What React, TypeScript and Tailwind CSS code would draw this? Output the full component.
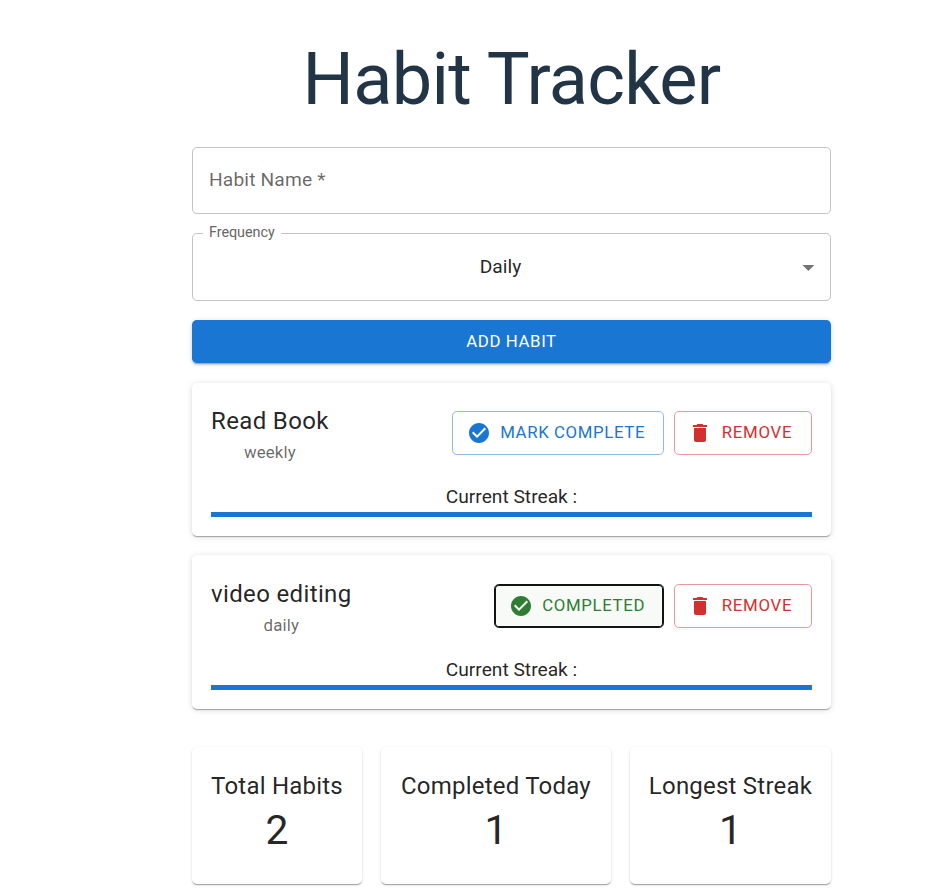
import React from "react";

const shadowStat =
  "shadow-[0_2px_1px_-1px_rgba(0,0,0,0.2),0_1px_1px_0_rgba(0,0,0,0.14),0_1px_3px_0_rgba(0,0,0,0.12)]";
const shadowCard =
  "shadow-[0_2px_1px_-1px_rgba(0,0,0,0.2),0_1px_1px_0_rgba(0,0,0,0.14),0_1px_6px_0_rgba(0,0,0,0.14)]";
const shadowButton =
  "shadow-[0_3px_1px_-2px_rgba(0,0,0,0.2),0_2px_2px_0_rgba(0,0,0,0.14),0_1px_6px_0_rgba(0,0,0,0.12)]";

const buttonBase =
  "flex h-[44px] items-center rounded-[4.8px] border text-[16.8px] leading-[29.4px] uppercase whitespace-nowrap";

function Icon({ d }: { d: string }) {
  return (
    <svg viewBox="0 0 24 24" className="mr-[9px] -ml-[4.8px] size-6 shrink-0 fill-current">
      <path d={d} />
    </svg>
  );
}

const CHECK =
  "M12 2C6.48 2 2 6.48 2 12s4.48 10 10 10 10-4.48 10-10S17.52 2 12 2zm-2 15-5-5 1.41-1.41L10 14.17l7.59-7.59L19 8l-9 9z";
const TRASH = "M6 19c0 1.1.9 2 2 2h8c1.1 0 2-.9 2-2V7H6v12zM19 4h-3.5l-1-1h-5l-1 1H5v2h14V4z";

function HabitCard({ name, frequency, done }: { name: string; frequency: string; done?: boolean }) {
  return (
    <section className={`rounded-[4.8px] bg-white px-[19px] ${done ? "h-[154px] pt-[20px]" : "h-[153px] pt-[19px]"} ${shadowCard}`}>
      <div className="flex h-[62px] items-center justify-between">
        <div className="text-center">
          <h2 className="text-2xl leading-[38px] tracking-[0.36px]">{name}</h2>
          <p className="text-[16.8px] leading-[24px] tracking-[0.01071em] text-black/60">{frequency}</p>
        </div>
        <div className="flex gap-[10px]">
          {done ? (
            <button className={`${buttonBase} w-[170px] border-[#101412] bg-[#f8faf8] pl-[19px] tracking-[0.65px] text-[#2e7d32] ring-1 ring-[#101412] ring-inset`}>
              <Icon d={CHECK} />
              <span className="-mt-px">Completed</span>
            </button>
          ) : (
            <button className={`${buttonBase} w-[212px] border-[#8cbae8] pl-[19px] tracking-[0.62px] text-[#1976d2]`}>
              <Icon d={CHECK} />
              <span className="-mt-px">Mark Complete</span>
            </button>
          )}
          <button className={`${buttonBase} w-[138px] border-[#e99797] pl-[18px] tracking-[0.7px] text-[#d32f2f]`}>
            <Icon d={TRASH} />
            <span className="-mt-px ml-[0.6px]">Remove</span>
          </button>
        </div>
      </div>
      <p className="mt-[18px] mb-px text-center text-[19.2px] leading-[29px]">Current Streak :</p>
      <div className="h-[5px] bg-[#1976d2]" />
    </section>
  );
}

function Stat({ label, value, width }: { label: string; value: number; width: string }) {
  return (
    <section className={`${width} h-[137px] rounded-[4.8px] bg-white pt-[20px] text-center ${shadowStat}`}>
      <h2 className="text-2xl leading-[38.4px] tracking-[0.22px] whitespace-nowrap">{label}</h2>
      <p className="text-[40.8px] leading-[50.4px] tracking-[0.00735em]">{value}</p>
    </section>
  );
}

export default function App() {
  return (
    <main className="h-[888px] overflow-hidden bg-white font-[Roboto,sans-serif] text-black/87">
      <div className="ml-[192px] w-[639px] pt-[36px]">
        <h1 className="h-[86px] text-center text-[72px] leading-[87px] tracking-[-0.7px] text-[#213547]">Habit Tracker</h1>
        <div className="mt-[25px] flex h-[67px] items-center rounded-[4.8px] border border-black/23 px-[16px] text-[19.2px] tracking-[0.15px] text-black/60">
          <span>Habit Name *</span>
        </div>
        <div className="relative mt-[19px] flex h-[68px] items-center justify-center rounded-[4.8px] border border-black/23 text-[19.2px]">
          <span className="absolute -top-[11px] left-[10px] w-[78px] bg-white pl-[6px] text-[14.4px] leading-5 tracking-[-0.05px] text-[#666666]">Frequency</span>
          <span className="-translate-x-[11px]">Daily</span>
          <svg viewBox="0 0 24 24" className="absolute right-[7.6px] size-[28.8px] fill-black/54">
            <path d="M7 10l5 5 5-5z" />
          </svg>
        </div>
        <button className={`mt-[19px] flex h-[43px] w-full items-center justify-center rounded-[4.8px] bg-[#1976d2] text-[16.8px] tracking-[0.6px] text-white uppercase ${shadowButton}`}>
          Add Habit
        </button>
        <div className="mt-[20px] flex flex-col gap-[19px]">
          <HabitCard name="Read Book" frequency="weekly" />
          <HabitCard name="video editing" frequency="daily" done />
        </div>
        <div className="mt-[38px] flex justify-between">
          <Stat label="Total Habits" value={2} width="w-[170px]" />
          <Stat label="Completed Today" value={1} width="w-[230px]" />
          <Stat label="Longest Streak" value={1} width="w-[201px]" />
        </div>
      </div>
    </main>
  );
}
